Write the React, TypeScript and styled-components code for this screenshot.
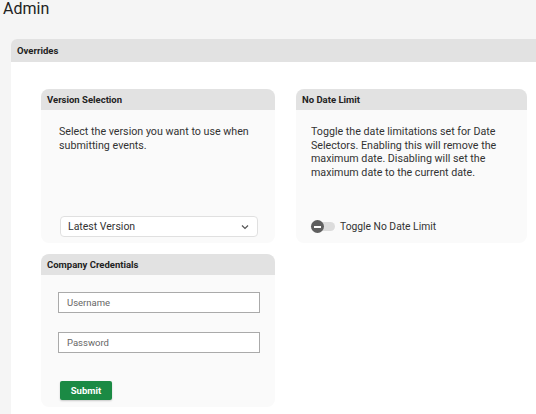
import styled, { createGlobalStyle } from "styled-components";

const GlobalStyle = createGlobalStyle`
    body {
        margin: 0;
        background: #f5f5f5;
        font-family: Roboto, "Liberation Sans", sans-serif;
        color: #333;
        overflow: hidden;
    }
`;

export default function App() {
    return <Page>
        <GlobalStyle />
        <Title>Admin</Title>
        <Panel>
            <PanelHeader>Overrides</PanelHeader>
            <PanelBody>
                <Card>
                    <CardHeader>Version Selection</CardHeader>
                    <CardBody>
                        <Text>Select the version you want to use when submitting events.</Text>
                        <Select>
                            <span>Latest Version</span>
                            <svg width="10" height="10" viewBox="0 0 10 10">
                                <path d="M2 3.5 L5 6.5 L8 3.5" fill="none" stroke="#555" strokeWidth="1.2" />
                            </svg>
                        </Select>
                    </CardBody>
                </Card>
                <Card>
                    <CardHeader>No Date Limit</CardHeader>
                    <CardBody $right>
                        <Text>Toggle the date limitations set for Date Selectors. Enabling this will remove the maximum date. Disabling will set the maximum date to the current date.</Text>
                        <ToggleRow>
                            <Track>
                                <Knob />
                            </Track>
                            <span>Toggle No Date Limit</span>
                        </ToggleRow>
                    </CardBody>
                </Card>
                <Card>
                    <CardHeader>Company Credentials</CardHeader>
                    <FormBody>
                        <Input placeholder="Username" />
                        <Input placeholder="Password" type="password" />
                        <SubmitButton>Submit</SubmitButton>
                    </FormBody>
                </Card>
            </PanelBody>
        </Panel>
    </Page>
};

const Page = styled.div`
    width: 100%;
`;

const Title = styled.h1`
    margin: 0;
    padding: 0 0 0 3px;
    font-size: 16px;
    font-weight: 400;
    line-height: 17px;
    color: #222;
`;

const Panel = styled.section`
    margin: 22px 0 0 11px;
    background: #fff;
    border-radius: 6px 0 0 0;
`;

const PanelHeader = styled.div`
    height: 23px;
    background: #e2e2e2;
    border-radius: 6px 0 0 0;
    padding-left: 6px;
    font-size: 9.5px;
    font-weight: 700;
    line-height: 23px;
    color: #222;
`;

const PanelBody = styled.div`
    display: grid;
    grid-template-columns: 234px 231px;
    grid-template-rows: 154px 153px;
    column-gap: 21px;
    row-gap: 11px;
    padding: 27px 0 10px 30px;
`;

const Card = styled.div`
    display: flex;
    flex-direction: column;
    background: #fafafa;
    border-radius: 8px;
    overflow: hidden;
`;

const CardHeader = styled.div`
    height: 21px;
    background: #e2e2e2;
    padding-left: 6px;
    font-size: 9.5px;
    font-weight: 700;
    line-height: 21px;
    color: #222;
`;

const CardBody = styled.div<{ $right?: boolean }>`
    flex: 1;
    display: flex;
    flex-direction: column;
    padding: ${p => p.$right ? "15px 15px 10px 15px" : "15px 17px 6px 18px"};
`;

const Text = styled.p`
    margin: 0;
    font-size: 10.7px;
    line-height: 13.7px;
    color: #333;
`;

const Select = styled.div`
    margin: auto 0 0 1px;
    height: 21px;
    box-sizing: border-box;
    display: flex;
    align-items: center;
    justify-content: space-between;
    padding: 0 7px 0 7px;
    background: #fff;
    border: 1px solid #e0e0e0;
    border-radius: 4px;
    font-size: 10.5px;
    color: #333;
`;

const ToggleRow = styled.div`
    margin-top: auto;
    display: flex;
    align-items: center;
    gap: 5px;
    font-size: 10.3px;
    color: #333;
`;

const Track = styled.div`
    position: relative;
    width: 24px;
    height: 9px;
    border-radius: 5px;
    background: #dcdcdc;
`;

const Knob = styled.div`
    position: absolute;
    left: 0;
    top: -2px;
    width: 13px;
    height: 13px;
    border-radius: 50%;
    background: #5f5f5f;
    &::after {
        content: "";
        position: absolute;
        left: 3px;
        right: 3px;
        top: 6px;
        height: 1.5px;
        background: #fff;
    }
`;

const FormBody = styled.div`
    display: flex;
    flex-direction: column;
    align-items: flex-start;
    padding: 17px 15px 7px 17px;
`;

const Input = styled.input`
    width: 202px;
    height: 21px;
    box-sizing: border-box;
    margin: 0 0 19px 0;
    padding: 0 8px;
    border: 1px solid #aaa;
    border-radius: 0;
    background: #fff;
    font-family: Roboto, "Liberation Sans", sans-serif;
    font-size: 9.5px;
    &::placeholder {
        color: #666;
    }
`;

const SubmitButton = styled.button`
    margin: 9px 0 0 2px;
    width: 52px;
    height: 19px;
    border: none;
    border-radius: 2px;
    background: #1b8a44;
    color: #fff;
    font-family: Roboto, "Liberation Sans", sans-serif;
    font-size: 9.5px;
    font-weight: 700;
    box-shadow: 0 1px 2px rgba(0,0,0,0.2);
`;
